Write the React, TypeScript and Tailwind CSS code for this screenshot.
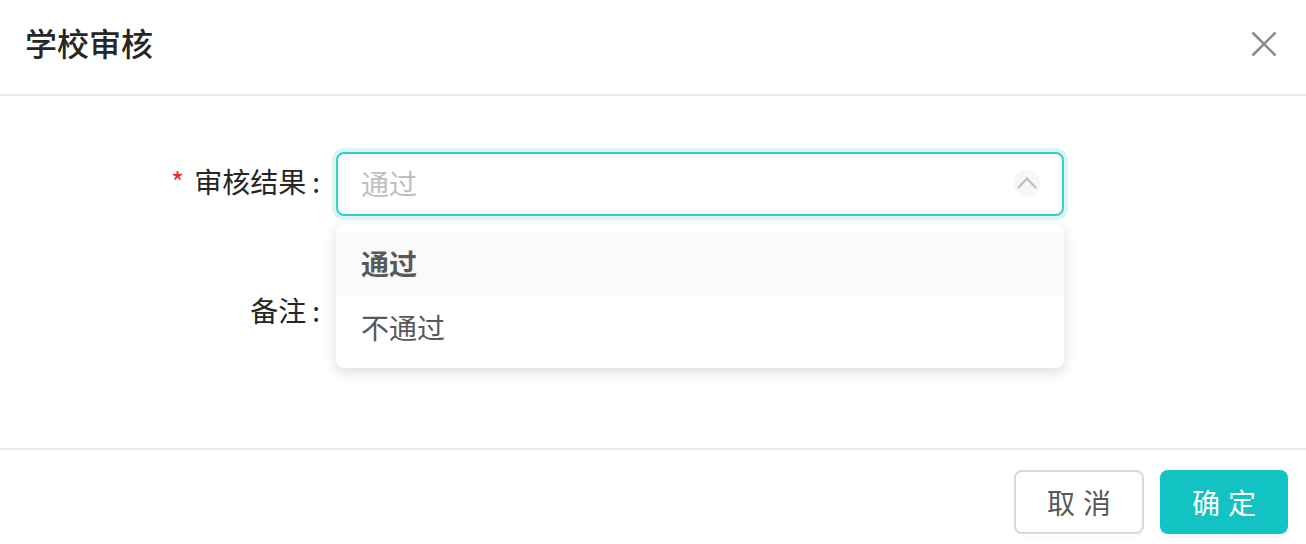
import { useState } from "react"

const font = { fontFamily: '"Noto Sans CJK SC", "Noto Sans", sans-serif' }

function CloseIcon() {
  return (
    <svg width="26" height="26" viewBox="0 0 26 26" fill="none">
      <path d="M1.5 1.5 L24.5 24.5 M24.5 1.5 L1.5 24.5" stroke="#8c8c8c" strokeWidth="2.6" />
    </svg>
  )
}

function UpIcon() {
  return (
    <span className="flex h-[26px] w-[26px] items-center justify-center rounded-full bg-[#f7f7f7]">
      <svg width="20" height="12" viewBox="0 0 20 12" fill="none">
        <path d="M1 11 L10 1.5 L19 11" stroke="#bfbfbf" strokeWidth="2.2" />
      </svg>
    </span>
  )
}

export default function App() {
  const [value] = useState("通过")
  const options = ["通过", "不通过"]

  return (
    <div className="w-[1306px] h-[544px] overflow-hidden bg-white" style={font}>
      <div className="flex h-[96px] items-center justify-between border-b-2 border-[#e8e8e8] pl-[25px] pr-[29px] pb-[10px]">
        <h1 className="text-[32px] font-medium leading-none text-[#262626]">学校审核</h1>
        <button className="mt-[4px] flex items-center justify-center">
          <CloseIcon />
        </button>
      </div>

      <div className="h-[352px] pt-[56px]">
        <div className="flex items-center">
          <label className="flex w-[336px] justify-end pr-[16px] pb-[6px] text-[28px] leading-none text-[#262626]">
            <span className="mr-[10px] text-[#f5222d]">*</span>
            审核结果
            <span className="ml-[6px]">:</span>
          </label>
          <div className="relative">
            <div className="flex h-[64px] w-[728px] items-center justify-between rounded-[8px] border-2 border-[#36cfc9] pl-[23px] pr-[22px] pb-[2px] shadow-[0_0_0_4px_rgba(19,194,194,0.15)]">
              <span className="text-[28px] text-[#bfbfbf]">{value}</span>
              <UpIcon />
            </div>
            <div className="absolute left-0 top-[72px] z-10 w-[728px] rounded-[8px] bg-white py-[8px] shadow-[0_4px_14px_rgba(0,0,0,0.14)]">
              {options.map((o) => (
                <div
                  key={o}
                  className={
                    o === value
                      ? "flex h-[64px] items-center bg-[#fafafa] px-[25px] pb-[2px] text-[28px] font-semibold text-[#595959]"
                      : "flex h-[64px] items-center px-[25px] pb-[2px] text-[28px] text-[#595959]"
                  }
                >
                  {o}
                </div>
              ))}
            </div>
          </div>
        </div>

        <div className="mt-[64px] flex items-center">
          <label className="flex w-[336px] justify-end pr-[16px] pb-[4px] text-[28px] leading-none text-[#262626]">
            备注
            <span className="ml-[6px]">:</span>
          </label>
          <div className="h-[64px] w-[728px] rounded-[8px] border-2 border-[#d9d9d9]" />
        </div>
      </div>

      <div className="flex justify-end gap-[16px] border-t-2 border-[#e8e8e8] pr-[18px] pt-[20px]">
        <button className="h-[64px] w-[130px] rounded-[8px] border-2 border-[#d9d9d9] bg-white pl-[8px] text-[28px] tracking-[8px] text-[#595959] shadow-[0_4px_0_rgba(0,0,0,0.015)]">
          取消
        </button>
        <button className="h-[64px] w-[128px] rounded-[8px] bg-[#13c2c2] pl-[8px] text-[28px] tracking-[8px] text-white shadow-[0_4px_0_rgba(0,0,0,0.03)]">
          确定
        </button>
      </div>
    </div>
  )
}
